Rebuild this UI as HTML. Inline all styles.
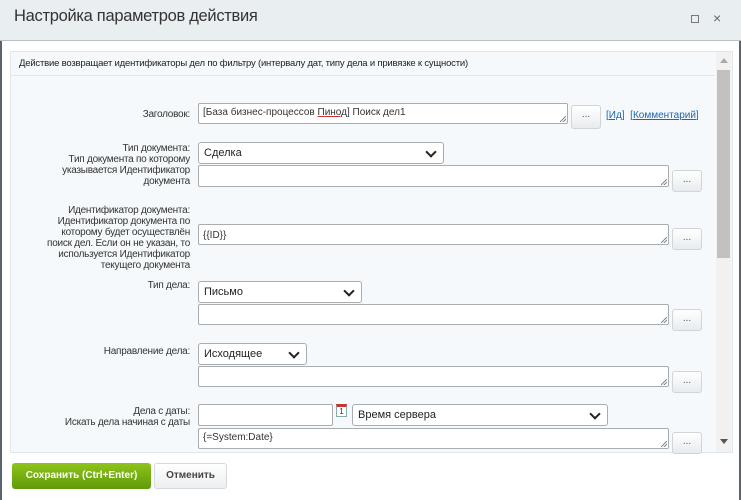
<!DOCTYPE html>
<html><head><meta charset="utf-8"><style>
*{box-sizing:border-box;margin:0;padding:0}
body{width:741px;height:500px;overflow:hidden;background:#fff;font-family:"Liberation Sans",Arial,sans-serif;font-size:10px;color:#222;position:relative}
.a{position:absolute}
.hdr{left:0;top:0;width:741px;height:41px;background:#e9eef1;border-bottom:1px solid #b9c1c6}
.title{left:14px;top:7px;font-size:16.5px;color:#333;letter-spacing:-0.3px}
.lb{position:absolute;right:551px;text-align:right;width:180px;line-height:11px;font-size:10px;color:#333;letter-spacing:-0.25px;white-space:nowrap}
.ta{position:absolute;background:#fff;border:1px solid #a8adb1;border-radius:2px;padding:3px 4px;font-size:10px;color:#333}
.ta:after{content:"";position:absolute;right:1px;bottom:1px;width:6px;height:6px;background:linear-gradient(135deg,transparent 45%,#888 45%,#888 55%,transparent 55%,transparent 70%,#888 70%,#888 80%,transparent 80%)}
.ta.n:after{display:none}
.sel{position:absolute;background:#fff;border:1px solid #a8adb1;border-radius:3px;padding:4px 5px;font-size:11px;color:#222}
.sel:after{content:"";position:absolute;right:8px;top:5px;width:6px;height:6px;border-right:2px solid #222;border-bottom:2px solid #222;transform:rotate(45deg)}
.bt{position:absolute;width:30px;height:22px;border:1px solid #d0d5d8;border-radius:3px;background:linear-gradient(#fff,#e8ecee);text-align:center;line-height:18px;font-size:10px;color:#555}
</style></head><body>
<div class="a" style="left:0;top:0;width:2px;height:500px;background:#5a646a"></div>
<div class="a" style="right:0;top:0;width:2px;height:500px;background:#5a646a"></div>
<div class="a hdr"></div>
<div class="a title">Настройка параметров действия</div>
<div class="a" style="left:691px;top:15px;width:8px;height:8px;border:1px solid #777"></div>
<div class="a" style="left:713px;top:10px;font-size:14px;color:#666">×</div>

<div class="a" style="left:10px;top:51px;width:723px;height:402px;background:#f5f9fb;border:1px solid #dfe7ec"></div>
<div class="a" style="left:11px;top:52px;width:704px;height:24px;border-bottom:1px solid #dfe7ec;font-size:9.5px;line-height:24px;padding-left:8px;color:#222;letter-spacing:-0.2px">Действие возвращает идентификаторы дел по фильтру (интервалу дат, типу дела и привязке к сущности)</div>
<div class="a" style="left:716px;top:52px;width:15px;height:400px;background:#f1f1f1"></div>
<div class="a" style="left:720px;top:58px;border:4px solid transparent;border-bottom:5px solid #aaa;border-top:0"></div>
<div class="a" style="left:717px;top:70px;width:13px;height:188px;background:#c1c1c1"></div>
<div class="a" style="left:720px;top:439px;border:4px solid transparent;border-top:5px solid #555;border-bottom:0"></div>

<div class="lb" style="top:109px">Заголовок:</div>
<div class="ta" style="left:198px;top:103px;width:370px;height:21px">[База бизнес-процессов <u style="text-decoration-color:#c33">Пинод</u>] Поиск дел1</div>
<div class="bt" style="left:571px;top:105px;height:24px">...</div>
<div class="a" style="left:606px;top:110px;color:#2067b0">[<u>Ид</u>]&nbsp;&nbsp;[<u>Комментарий</u>]</div>

<div class="lb" style="top:143px">Тип документа:<br>Тип документа по которому<br>указывается Идентификатор<br>документа</div>
<div class="sel" style="left:198px;top:142px;width:246px;height:22px">Сделка</div>
<div class="ta" style="left:198px;top:165px;width:471px;height:22px"></div>
<div class="bt" style="left:672px;top:170px">...</div>

<div class="lb" style="top:205px">Идентификатор документа:<br>Идентификатор документа по<br>которому будет осуществлён<br>поиск дел. Если он не указан, то<br>используется Идентификатор<br>текущего документа</div>
<div class="ta" style="left:198px;top:224px;width:471px;height:21px;padding-top:5px">{{ID}}</div>
<div class="bt" style="left:672px;top:228px">...</div>

<div class="lb" style="top:280px">Тип дела:</div>
<div class="sel" style="left:198px;top:281px;width:164px;height:22px">Письмо</div>
<div class="ta" style="left:198px;top:304px;width:471px;height:21px"></div>
<div class="bt" style="left:672px;top:309px">...</div>

<div class="lb" style="top:346px">Направление дела:</div>
<div class="sel" style="left:198px;top:343px;width:109px;height:22px">Исходящее</div>
<div class="ta" style="left:198px;top:366px;width:471px;height:21px"></div>
<div class="bt" style="left:672px;top:371px">...</div>

<div class="lb" style="top:406px">Дела с даты:<br>Искать дела начиная с даты</div>
<div class="ta n" style="left:198px;top:404px;width:135px;height:22px"></div>
<div class="a" style="left:336px;top:404px;width:11px;height:13px;border:1px solid #8aa;background:#fff;border-top:3px solid #c33;font-size:8px;text-align:center;line-height:9px;color:#236">1</div>
<div class="sel" style="left:352px;top:404px;width:256px;height:22px">Время сервера</div>
<div class="ta" style="left:198px;top:428px;width:471px;height:21px">{=System:Date}</div>
<div class="bt" style="left:672px;top:432px">...</div>

<div class="a" style="left:12px;top:463px;width:139px;height:26px;border-radius:3px;background:linear-gradient(#8fc41a,#5f9a08);color:#fff;font-weight:bold;font-size:10px;text-align:center;line-height:26px">Сохранить (Ctrl+Enter)</div>
<div class="a" style="left:154px;top:463px;width:73px;height:26px;border-radius:3px;border:1px solid #d5dadd;background:linear-gradient(#fff,#eceff1);color:#444;font-weight:bold;font-size:10px;text-align:center;line-height:24px">Отменить</div>
</body></html>
